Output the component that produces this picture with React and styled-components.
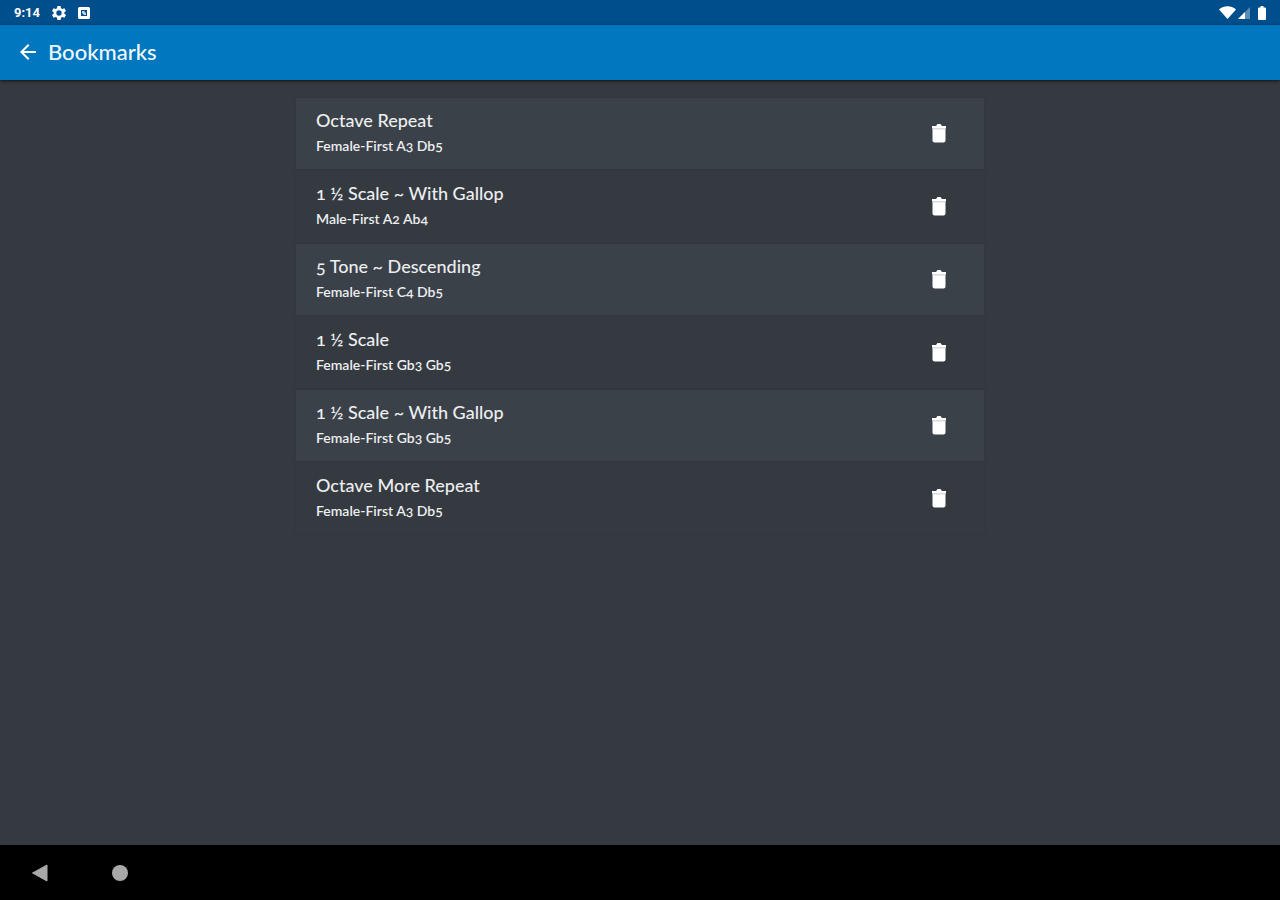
import { useState } from 'react';
import styled, { createGlobalStyle } from 'styled-components';

const initialBookmarks = [
  { id: 1, title: 'Octave Repeat', detail: 'Female-First A3 Db5' },
  { id: 2, title: '1 ½ Scale ~ With Gallop', detail: 'Male-First A2 Ab4' },
  { id: 3, title: '5 Tone ~ Descending', detail: 'Female-First C4 Db5' },
  { id: 4, title: '1 ½ Scale', detail: 'Female-First Gb3 Gb5' },
  { id: 5, title: '1 ½ Scale ~ With Gallop', detail: 'Female-First Gb3 Gb5' },
  { id: 6, title: 'Octave More Repeat', detail: 'Female-First A3 Db5' },
];

const App = () => {

  const [bookmarks, setBookmarks] = useState(initialBookmarks);

  const handleDelete = (id) => {
    setBookmarks(bookmarks.filter((bookmark) => bookmark.id !== id));
  }

  return (
    <Screen>
      <GlobalStyle />
      <StatusBar>
        <StatusGroup>
          <Clock>9:14</Clock>
          <svg width="16" height="16" viewBox="0 0 24 24" fill="#fff">
            <path fillRule="evenodd" d="M9.6 1.5h4.8l.6 3.2 2 1.2 3.1-1.1 2.4 4.1-2.5 2.1v2l2.5 2.1-2.4 4.1-3.1-1.1-2 1.2-.6 3.2H9.6L9 19.3l-2-1.2-3.1 1.1-2.4-4.1L4 13v-2L1.5 8.9l2.4-4.1L7 5.9l2-1.2zM12 8a4 4 0 1 0 0 8 4 4 0 0 0 0-8z" />
          </svg>
          <svg width="12" height="12" viewBox="0 0 12 12" fill="#fff">
            <path fillRule="evenodd" d="M1.5 0h9A1.5 1.5 0 0 1 12 1.5v9a1.5 1.5 0 0 1-1.5 1.5h-9A1.5 1.5 0 0 1 0 10.5v-9A1.5 1.5 0 0 1 1.5 0zM3 3v6h6V3z" />
            <path d="M4 4h2l2 2v2H6L4 6z" opacity=".75" />
          </svg>
        </StatusGroup>
        <SignalGroup>
          <svg width="17" height="13" viewBox="0 0 17 13" fill="#fff">
            <path d="M0 3.5C5-.8 12-.8 17 3.500L8.500 13z" />
          </svg>
          <svg width="12" height="12" viewBox="0 0 12 12" fill="#fff">
            <path d="M12 0v12H0z" opacity=".35" />
            <path d="M7 5v7H0z" />
          </svg>
          <Battery width="8" height="14" viewBox="0 0 8 14" fill="#fff">
            <path d="M2.5 0h3v1.5H7a1 1 0 0 1 1 1V13a1 1 0 0 1-1 1H1a1 1 0 0 1-1-1V2.5a1 1 0 0 1 1-1h1.5z" />
          </Battery>
        </SignalGroup>
      </StatusBar>

      <AppBar>
        <IconButton aria-label="Back">
          <svg width="24" height="24" viewBox="0 0 24 24" fill="#fff">
            <path d="M20 11H7.830l5.590-5.590L12 4l-8 8 8 8 1.410-1.410L7.830 13H20v-2z" />
          </svg>
        </IconButton>
        <Heading>Bookmarks</Heading>
      </AppBar>

      <Content>
        <List>
          {bookmarks.map((bookmark, index) => (
            <Row key={bookmark.id} $light={index % 2 === 0}>
              <div>
                <Title>{bookmark.title}</Title>
                <Detail>{bookmark.detail}</Detail>
              </div>
              <IconButton
                aria-label={`Delete ${bookmark.title}`}
                onClick={() => handleDelete(bookmark.id)}
              >
                <svg width="24" height="24" viewBox="0 0 24 24" fill="#fff">
                  <path d="M5.500 7h13v12.500a2 2 0 0 1-2 2h-9a2 2 0 0 1-2-2z" />
                  <path d="M5.500 7h13v1.500h-13z" fill="#d9dbdd" />
                  <path d="M5 5h4l1.500-2h3L15 5h4v2H5z" />
                </svg>
              </IconButton>
            </Row>
          ))}
        </List>
      </Content>

      <NavBar>
        <IconButton aria-label="System back">
          <svg width="24" height="24" viewBox="0 0 24 24" fill="#a9a9a9">
            <path d="M4.500 12 19 4v16z" stroke="#a9a9a9" strokeLinejoin="round" />
          </svg>
        </IconButton>
        <IconButton aria-label="Home">
          <svg width="24" height="24" viewBox="0 0 24 24" fill="#a9a9a9">
            <circle cx="12" cy="12" r="8" />
          </svg>
        </IconButton>
      </NavBar>
    </Screen>
  )
}

const GlobalStyle = createGlobalStyle`
  * {
    box-sizing: border-box;
  }
  body {
    margin: 0;
    background: #353a40;
    color: #eceef0;
    font-family: Lato, "Noto Sans", sans-serif;
    font-variant-numeric: oldstyle-nums;
  }
`

const Screen = styled.div`
  display: flex;
  flex-direction: column;
  min-height: 100vh;
`

const StatusBar = styled.div`
  display: flex;
  align-items: center;
  justify-content: space-between;
  height: 25px;
  padding: 0 14px;
  background: #004e8b;
`

const StatusGroup = styled.div`
  display: flex;
  align-items: center;
  gap: 11px;
`

const SignalGroup = styled.div`
  display: flex;
  align-items: center;
  gap: 2px;
`

const Battery = styled.svg`
  margin-left: 6px;
`

const Clock = styled.span`
  color: #fff;
  font-family: Roboto, sans-serif;
  font-size: 13px;
  font-variant-numeric: lining-nums;
  font-weight: 700;
  line-height: 16px;
`

const AppBar = styled.header`
  display: flex;
  align-items: center;
  gap: 8px;
  height: 55px;
  padding: 0 16px 2px;
  background: #0077be;
  box-shadow: 0 1px 3px rgba(0, 0, 0, 0.7);
`

const Heading = styled.h1`
  margin: 0;
  color: #f2f7fb;
  font-size: 22px;
  font-weight: 500;
  line-height: 28px;
`

const IconButton = styled.button`
  display: flex;
  padding: 0;
  border: 0;
  background: none;
  cursor: pointer;
`

const Content = styled.main`
  flex: 1;
  padding: 18px 16px;
`

const List = styled.ul`
  display: flex;
  flex-direction: column;
  gap: 2px;
  max-width: 688px;
  margin: 0 auto;
  padding: 0;
  list-style: none;
`

const Row = styled.li`
  display: flex;
  align-items: center;
  justify-content: space-between;
  padding: 10px 33px 11px 20px;
  background: ${({ $light }) => ($light ? '#3b4148' : '#353a40')};
  box-shadow: 0 0 2px rgba(0, 0, 0, 0.08);
`

const Title = styled.div`
  font-size: 18px;
  font-weight: 500;
  line-height: 25px;
`

const Detail = styled.div`
  font-size: 14px;
  font-weight: 600;
  line-height: 25px;
`

const NavBar = styled.nav`
  display: flex;
  align-items: center;
  gap: 56px;
  height: 55px;
  padding: 0 28px;
  background: #000;
`

export default App;
